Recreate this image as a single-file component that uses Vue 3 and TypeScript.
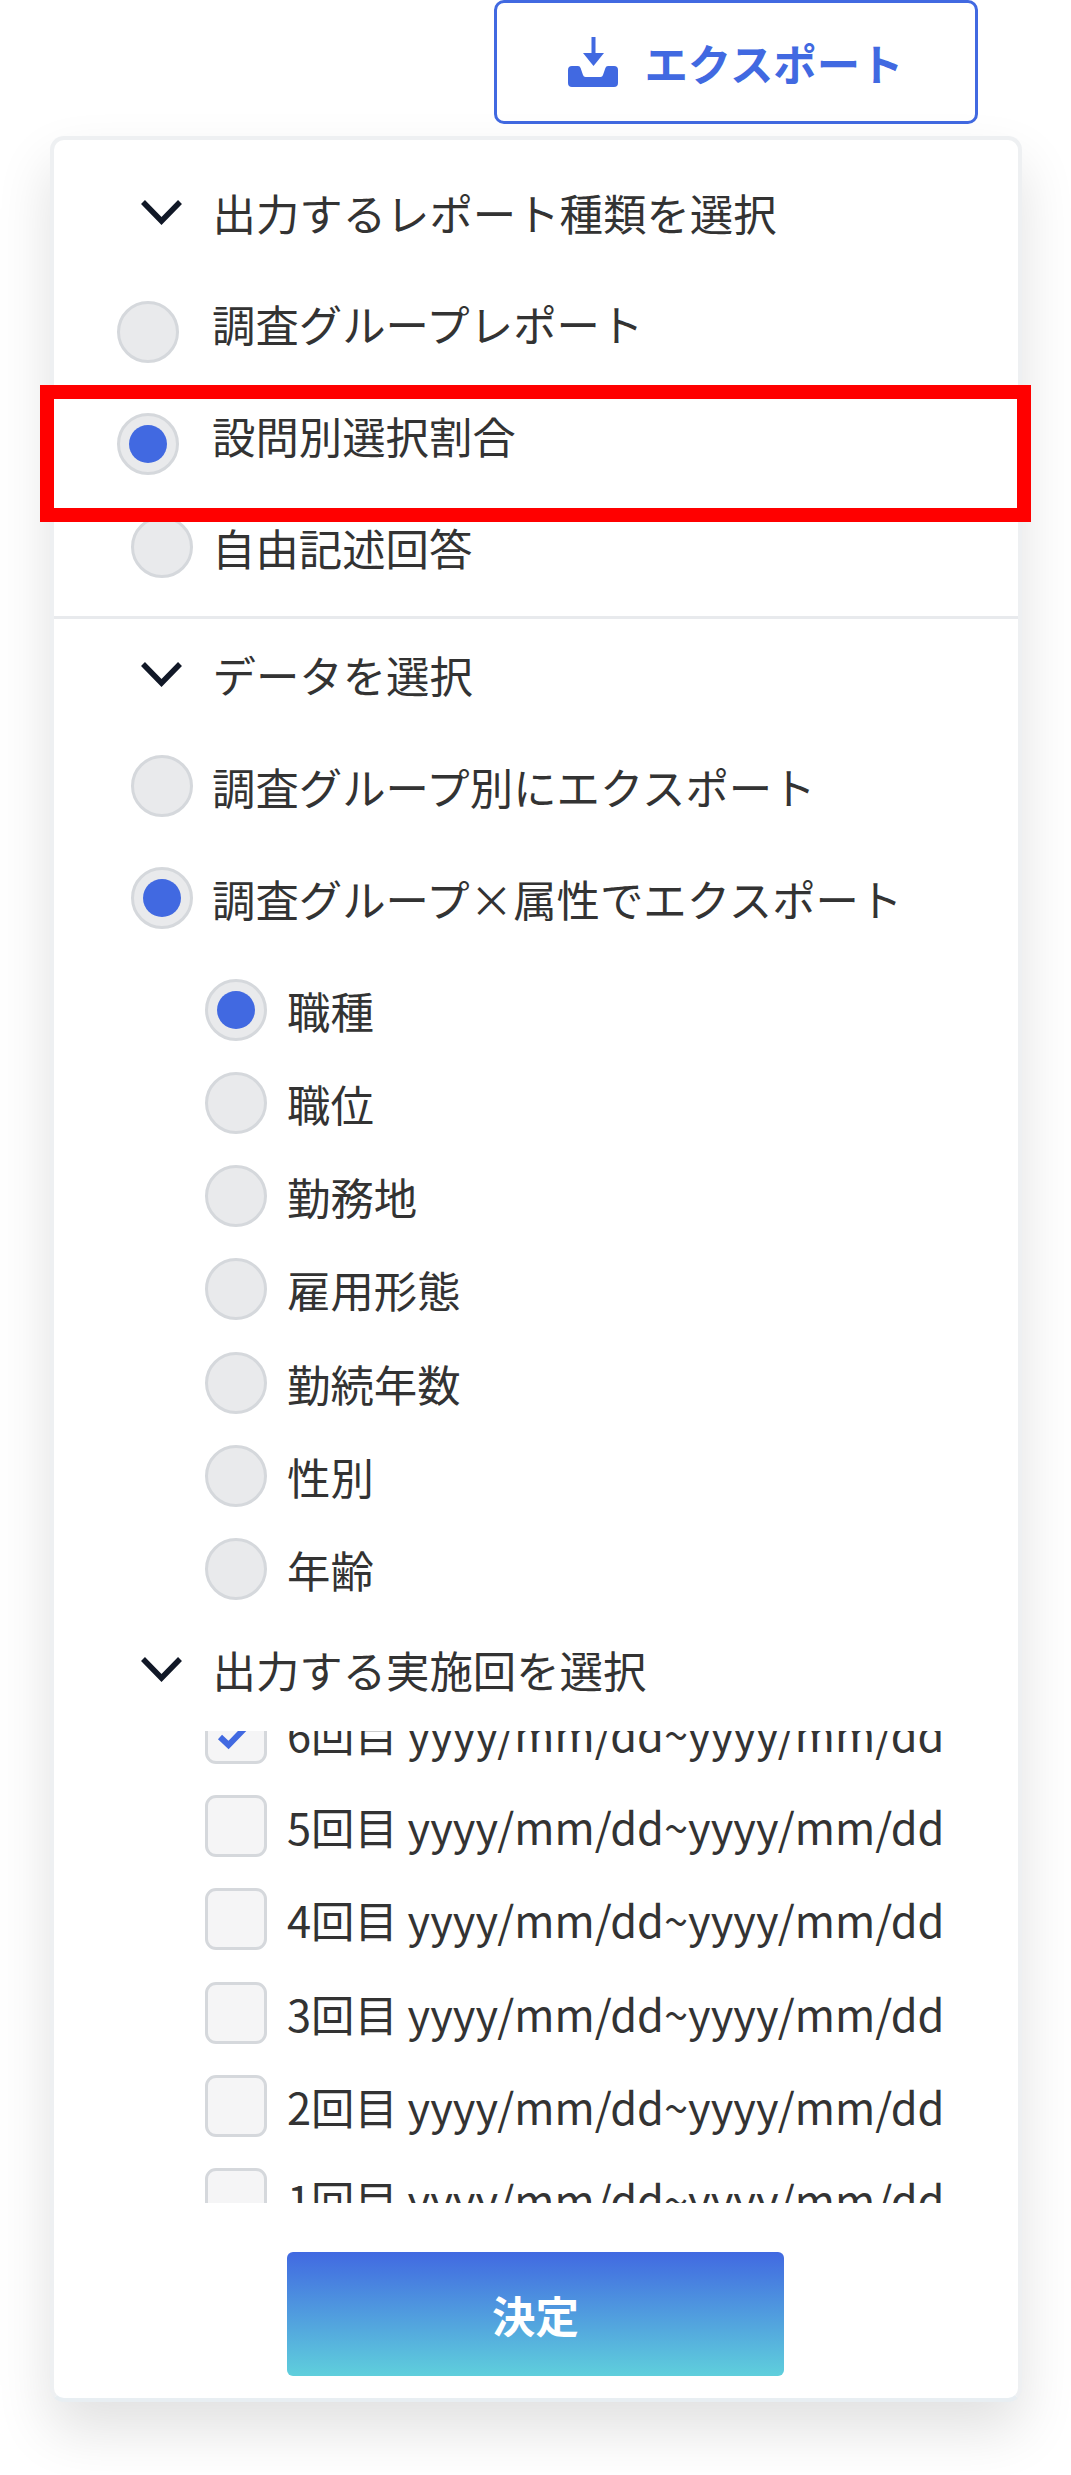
<script setup lang="ts">
import { ref } from 'vue'

interface Option {
  label: string
  checked?: boolean
  shifted?: boolean
}

const reportTypes = ref<Option[]>([
  { label: '調査グループレポート', shifted: true },
  { label: '設問別選択割合', checked: true, shifted: true },
  { label: '自由記述回答' }
])

const dataTypes = ref<Option[]>([
  { label: '調査グループ別にエクスポート' },
  { label: '調査グループ×属性でエクスポート', checked: true }
])

const attributes = ref<Option[]>([
  { label: '職種', checked: true },
  { label: '職位' },
  { label: '勤務地' },
  { label: '雇用形態' },
  { label: '勤続年数' },
  { label: '性別' },
  { label: '年齢' }
])

const rounds = ref<Option[]>(
  [6, 5, 4, 3, 2, 1].map((n) => ({
    label: `${n}回目 yyyy/mm/dd~yyyy/mm/dd`,
    checked: n === 6
  }))
)
</script>

<template>
  <div class="page">
    <button class="export-btn" type="button">
      <svg class="export-icon" viewBox="0 0 50 50" width="50" height="50">
        <rect x="23.5" y="0" width="4" height="18" fill="#4169e1" />
        <path d="M15 16H36L25.5 29Z" fill="#4169e1" />
        <path
          d="M4 29H10Q12 29 12.6 31L15 38Q15.6 40 17.5 40H32.5Q34.4 40 35 38L37.4 31Q38 29 40 29H46Q50 29 50 33V46Q50 50 46 50H4Q0 50 0 46V33Q0 29 4 29Z"
          fill="#4169e1"
        />
      </svg>
      <span>エクスポート</span>
    </button>

    <div class="card">
      <div class="section-title first">
        <svg class="chevron" viewBox="0 0 43 26" width="43" height="26">
          <path d="M3 3L21.5 22L40 3" fill="none" stroke="#111827" stroke-width="5.5" />
        </svg>
        <span class="title-text">出力するレポート種類を選択</span>
      </div>
      <div class="report-list">
        <label v-for="item in reportTypes" :key="item.label" class="row" :class="{ shifted: item.shifted }">
          <span class="radio"><i v-if="item.checked" class="dot"></i></span>
          <span class="row-text">{{ item.label }}</span>
        </label>
      </div>

      <div class="divider"></div>

      <div class="section-title">
        <svg class="chevron" viewBox="0 0 43 26" width="43" height="26">
          <path d="M3 3L21.5 22L40 3" fill="none" stroke="#111827" stroke-width="5.5" />
        </svg>
        <span class="title-text">データを選択</span>
      </div>
      <div class="data-list">
        <label v-for="item in dataTypes" :key="item.label" class="row">
          <span class="radio"><i v-if="item.checked" class="dot"></i></span>
          <span class="row-text">{{ item.label }}</span>
        </label>
      </div>
      <div class="attr-list">
        <label v-for="item in attributes" :key="item.label" class="row">
          <span class="radio"><i v-if="item.checked" class="dot"></i></span>
          <span class="row-text">{{ item.label }}</span>
        </label>
      </div>

      <div class="section-title third">
        <svg class="chevron" viewBox="0 0 43 26" width="43" height="26">
          <path d="M3 3L21.5 22L40 3" fill="none" stroke="#111827" stroke-width="5.5" />
        </svg>
        <span class="title-text">出力する実施回を選択</span>
      </div>
      <div class="round-scroll">
        <div class="round-list">
          <label v-for="item in rounds" :key="item.label" class="row">
            <span class="checkbox">
              <svg v-if="item.checked" viewBox="0 0 56 56" width="56" height="56">
                <path d="M12 32L20.5 40L37 23" fill="none" stroke="#4169e1" stroke-width="6" />
              </svg>
            </span>
            <span class="row-text">{{ item.label }}</span>
          </label>
        </div>
      </div>

      <button class="submit-btn" type="button">決定</button>
    </div>

    <div class="highlight"></div>
  </div>
</template>

<style>
html,
body {
  background: #fff;
}
</style>

<style scoped>
.page {
  position: relative;
  height: 2475px;
  overflow: hidden;
  background: #fff;
  font-family: 'Noto Sans CJK JP', 'Noto Sans', sans-serif;
  font-size: 43.4px;
  color: #333;
}

.export-btn {
  display: flex;
  align-items: center;
  justify-content: center;
  gap: 26px;
  box-sizing: border-box;
  width: 484px;
  height: 124px;
  margin: 0 0 0 494px;
  padding: 0;
  background: #fff;
  border: 3px solid #4169e1;
  border-radius: 10px;
  color: #4169e1;
  font-family: inherit;
  font-size: 43.4px;
  font-weight: 700;
}

.export-icon {
  flex: none;
}

.card {
  box-sizing: border-box;
  width: 972px;
  height: 2266px;
  margin: 12px 0 0 50px;
  padding-top: 43px;
  background: #fff;
  border: 4px solid #eef0f2;
  border-bottom-color: #e8eef2;
  border-radius: 14px;
  box-shadow: 0 28px 56px rgba(0, 0, 0, 0.12);
}

.section-title {
  display: flex;
  align-items: center;
  gap: 29.5px;
  height: 60px;
  margin: 26px 0 0 86px;
  line-height: 60px;
}

.section-title.first {
  margin-top: 0;
}

.section-title.third {
  margin-top: 41px;
}

.title-text {
  margin-top: -3px;
}

.chevron {
  flex: none;
  margin-top: -3px;
}

.row {
  display: flex;
  align-items: center;
  height: 62px;
  gap: 20px;
}

.row-text {
  margin-top: 0;
  line-height: 60px;
  white-space: nowrap;
}

.report-list {
  display: flex;
  flex-direction: column;
  margin: 58px 0 0 77px;
}

.report-list .row {
  gap: 19px;
}

.report-list .row.shifted {
  margin: 0 0 50px -14px;
  gap: 33px;
}

.report-list .row.shifted + .row:not(.shifted) {
  margin-top: -9px;
}

.report-list .row.shifted .row-text {
  margin-top: -18px;
}

.divider {
  height: 3px;
  margin-top: 38px;
  background: #e8eaed;
}

.data-list {
  display: flex;
  flex-direction: column;
  gap: 50px;
  margin: 50px 0 0 77px;
}

.data-list .row {
  gap: 19px;
}

.attr-list {
  display: flex;
  flex-direction: column;
  gap: 31.17px;
  margin: 50px 0 0 151px;
}

.radio {
  display: flex;
  flex: none;
  align-items: center;
  justify-content: center;
  box-sizing: border-box;
  width: 62px;
  height: 62px;
  background: #e9eaec;
  border: 3px solid #d5d8dc;
  border-radius: 50%;
}

.dot {
  display: block;
  width: 38px;
  height: 38px;
  background: #4169e1;
  border-radius: 50%;
}

.round-scroll {
  height: 472px;
  margin-top: 30px;
  overflow: hidden;
}

.round-list {
  display: flex;
  flex-direction: column;
  gap: 31.2px;
  margin: -29px 0 0 151px;
}

.checkbox {
  flex: none;
  box-sizing: border-box;
  width: 62px;
  height: 62px;
  background: #f5f5f6;
  border: 3px solid #d5d8dc;
  border-radius: 11px;
}

.checkbox svg {
  display: block;
}

.submit-btn {
  display: block;
  width: 497px;
  height: 124px;
  margin: 49px 0 0 233px;
  padding: 0;
  background: linear-gradient(180deg, #4169e1, #5fcfdc);
  border: none;
  border-radius: 6px;
  color: #fff;
  font-family: inherit;
  font-size: 43.4px;
  font-weight: 700;
}

/* annotation drawn over the screenshot */
.highlight {
  position: absolute;
  top: 385px;
  left: 40px;
  box-sizing: border-box;
  width: 991px;
  height: 137px;
  border: 14px solid #ff0000;
}
</style>
